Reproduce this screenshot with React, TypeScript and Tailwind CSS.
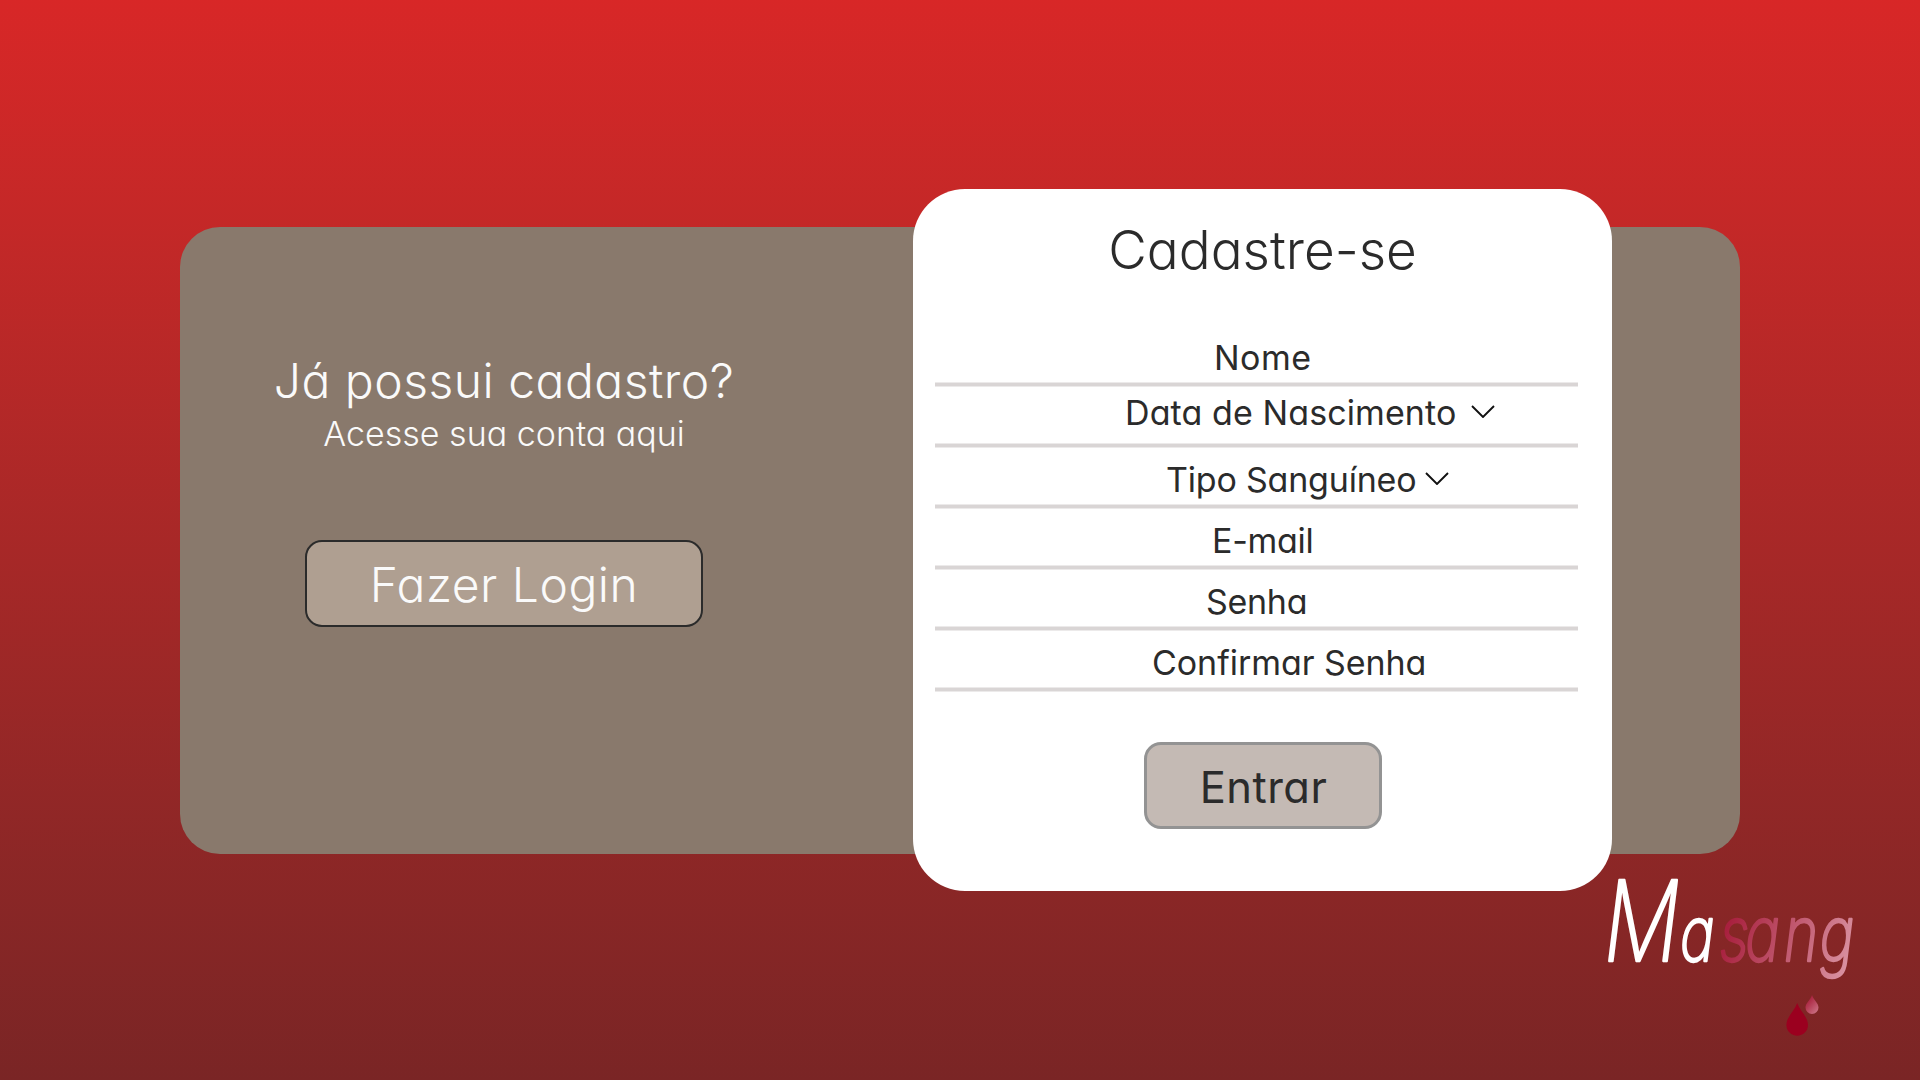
const inter = "font-['Inter',sans-serif] [font-feature-settings:'cv11'] whitespace-nowrap";

type FieldProps = { label: string; className: string; tracking?: string; chevron?: string };

const fields: FieldProps[] = [
  { label: "Nome", className: "pl-[279px] pt-3", tracking: "tracking-[0.5px]" },
  { label: "Data de Nascimento", className: "pl-[190px] pt-1.5", tracking: "tracking-[0.1px]", chevron: "mt-[12px] ml-[15px]" },
  { label: "Tipo Sanguíneo", className: "pl-[231px] pt-3", tracking: "tracking-[-0.2px]", chevron: "mt-[12px] ml-[9px]" },
  { label: "E-mail", className: "pl-[277px] pt-3", tracking: "tracking-[-0.3px]" },
  { label: "Senha", className: "pl-[271px] pt-3", tracking: "tracking-[-0.3px]" },
  { label: "Confirmar Senha", className: "pl-[217px] pt-3", tracking: "tracking-[-0.05px]" },
];

function Chevron({ className }: { className: string }) {
  return (
    <svg className={className} width="24" height="13" viewBox="0 0 24 13" fill="none">
      <path d="M1 1 L12 12 L23 1" stroke="#111" strokeWidth="1.9" />
    </svg>
  );
}

function Field({ label, className, tracking = "", chevron }: FieldProps) {
  return (
    <div className="flex h-[61px] flex-col">
      <div className={`flex flex-1 ${className}`}>
        <span className={`text-[34px] leading-[40px] font-normal ${tracking}`}>{label}</span>
        {chevron && <Chevron className={chevron} />}
      </div>
      <div className="h-[5px] border-y border-[#eceaea] bg-[#d9d5d5]" />
    </div>
  );
}

function Logo() {
  return (
    <svg className="mr-[40px] ml-auto shrink-0" width="290" height="206" viewBox="1590 854 290 206">
      <defs>
        <linearGradient id="fade" gradientUnits="userSpaceOnUse" x1="165" y1="-40" x2="325" y2="35">
          <stop offset="0" stopColor="#a8203e" />
          <stop offset="1" stopColor="#de9dab" />
        </linearGradient>
        <linearGradient id="drop" x1="0.2" y1="0.2" x2="0.8" y2="1">
          <stop offset="0" stopColor="#a8203c" />
          <stop offset="1" stopColor="#cb7183" />
        </linearGradient>
      </defs>
      <text
        transform="translate(1604 961) scale(0.76 1)"
        className="font-['Inter',sans-serif] font-extralight italic [font-feature-settings:'cv11']"
        fontSize="77"
        fill="#fff"
        stroke="#fff"
        strokeWidth="2.4"
        strokeLinejoin="round"
      >
        <tspan x="0" fontSize="111">M</tspan>
        <tspan x="100">a</tspan>
        <tspan fill="url(#fade)" stroke="url(#fade)" x="152 186 237 284">sang</tspan>
      </text>
      <path d="M1797.200 1003 C1800 1011 1808 1017 1808 1025 A10.800 10.800 0 0 1 1786.400 1025 C1786.400 1017 1794.500 1011 1797.200 1003Z" fill="#9b001f" />
      <path d="M1812 995 C1813.500 1000 1818.500 1003 1818.500 1007.500 A6.500 6.500 0 0 1 1805.500 1007.500 C1805.500 1003 1810.500 1000 1812 995Z" fill="url(#drop)" />
    </svg>
  );
}

export default function App() {
  return (
    <div className={`flex h-[1080px] w-[1920px] flex-col overflow-hidden bg-linear-to-b from-[#d82727] to-[#7a2525] pt-[227px] ${inter}`}>
      <main className="mx-[180px] flex h-[627px] shrink-0 rounded-[40px] bg-[#89796c]">
        <section className="flex w-[648px] flex-col items-center pt-[124px] text-[#fafafa]">
          <h1 className="text-[48px] leading-[60px] font-light tracking-[0.5px]">Já possui cadastro?</h1>
          <p className="mt-[3px] text-[34px] leading-[40px] font-light">Acesse sua conta aqui</p>
          <button className="mt-[86px] flex h-[87px] w-[398px] items-center justify-center rounded-[17px] border-2 border-[#2b2b2b] bg-[#af9f91] pt-0.5">
            <span className="text-[48px] font-light tracking-[0.5px]">Fazer Login</span>
          </button>
        </section>
        <section className="-my-[38px] ml-[85px] flex h-[702px] w-[699px] flex-col rounded-[52px] bg-white pt-[29px] text-[#2b2b2b]">
          <h2 className="self-center text-[53px] leading-[64px] font-light">Cadastre-se</h2>
          <form className="mt-[44px] ml-[22px] w-[643px]">
            {fields.map((f) => (
              <Field key={f.label} {...f} />
            ))}
          </form>
          <button className="mt-[50px] flex h-[87px] w-[238px] items-center justify-center self-center rounded-[17px] border-3 border-[#939393] bg-[#c4bab4] pt-1 pl-0.5">
            <span className="text-[43.5px] font-normal tracking-[0.5px]">Entrar</span>
          </button>
        </section>
      </main>
      <Logo />
    </div>
  );
}
